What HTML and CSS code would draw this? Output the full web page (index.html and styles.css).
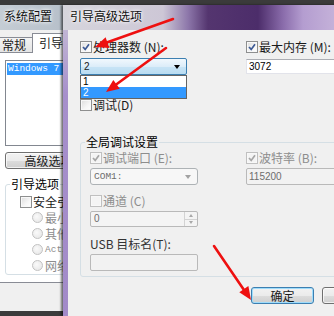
FILE: index.html
```html
<!DOCTYPE html>
<html lang="zh-CN">
  <head>
    <meta charset="UTF-8" />
    <meta name="viewport" content="width=device-width, initial-scale=1.0" />
    <title>引导高级选项</title>
    <link rel="stylesheet" href="styles.css">
  </head>

  <body>
    <div class="desk">
      <!-- msconfig window, behind -->
      <div class="win sys">
        <div class="titlebar">系统配置</div>
        <div class="client">
          <div class="tabs">
            <span class="tab">常规</span>
            <span class="tab active">引导</span>
          </div>
          <div class="panel">
            <div class="oslist">
              <div class="os sel mono">Windows 7</div>
            </div>
            <div class="btn wide">高级选项(V)...</div>
            <fieldset class="group bootopts">
              <legend>引导选项</legend>
              <div class="check"><span class="box"></span>安全引导(F)</div>
              <div class="radio"><span class="dot"></span>最小(I)</div>
              <div class="radio"><span class="dot"></span>其他外壳(L)</div>
              <div class="radio"><span class="dot"></span><span class="mono">Active Directory</span> 修复(P)</div>
              <div class="radio"><span class="dot"></span>网络(N)</div>
            </fieldset>
          </div>
        </div>
      </div>

      <!-- advanced boot options dialog -->
      <div class="win adv">
        <div class="titlebar">引导高级选项</div>
        <div class="client">
          <div class="pair">
            <div class="check">
              <span class="box"><svg width="8" height="8" viewBox="0 0 8 8"><path d="M1 4 L3.2 6.4 L7 1.2" /></svg></span>处理器数 (N):
            </div>
            <div class="check">
              <span class="box"><svg width="8" height="8" viewBox="0 0 8 8"><path d="M1 4 L3.2 6.4 L7 1.2" /></svg></span>最大内存 (M):
            </div>
            <div class="combo open">
              <span class="num">2</span><span class="caret"></span>
              <div class="droplist">
                <div class="item num">1</div>
                <div class="item num sel">2</div>
              </div>
            </div>
            <div class="field num">3072</div>
          </div>

          <div class="check debug"><span class="box"></span>调试(D)</div>

          <fieldset class="group global">
            <legend>全局调试设置</legend>
            <div class="pair inner">
              <div class="check off">
                <span class="box"><svg width="8" height="8" viewBox="0 0 8 8"><path d="M1 4 L3.2 6.4 L7 1.2" /></svg></span>调试端口 (E):
              </div>
              <div class="check off">
                <span class="box"><svg width="8" height="8" viewBox="0 0 8 8"><path d="M1 4 L3.2 6.4 L7 1.2" /></svg></span>波特率 (B):
              </div>
              <div class="combo off"><span class="mono">COM1:</span><span class="caret"></span></div>
              <div class="field off num">115200</div>
              <div class="check off low"><span class="box"></span>通道 (C)</div>
              <div></div>
              <div class="spin off">
                <span class="num">0</span>
                <span class="spinbtns"><span class="up"></span><span class="down"></span></span>
              </div>
              <div></div>
              <div class="caption low">USB 目标名(T):</div>
              <div></div>
              <div class="field off"></div>
            </div>
          </fieldset>

          <div class="buttons">
            <div class="btn default">确定</div>
            <div class="btn">取消</div>
          </div>
        </div>
      </div>

      <!-- red arrows drawn on top of the screenshot -->
      <svg class="arrows" width="334" height="316" viewBox="0 0 334 316">
        <g fill="#ee1010" stroke="#ee1010" stroke-width="2.6" stroke-linecap="round">
          <line x1="173" y1="19" x2="106" y2="42.8" />
          <polygon points="95,47 109.4,47.9 105.6,37.3" stroke="none" />
          <line x1="166" y1="48" x2="115.5" y2="85" />
          <polygon points="106,92 119.8,88.7 113.3,80" stroke="none" />
          <line x1="214" y1="246" x2="244" y2="290" />
          <polygon points="251,300 248.4,286 239.3,292.3" stroke="none" />
        </g>
      </svg>
    </div>
  </body>
</html>
```

FILE: styles.css
```css
* {
  box-sizing: border-box;
}

body {
  margin: 0;
  background: #3b3b3b;
  font-family: "Noto Sans CJK SC", "DejaVu Sans", sans-serif;
  font-size: 12px;
  color: #1a1a1a;
}

.desk {
  position: relative;
  width: 334px;
  height: 316px;
  overflow: hidden;
}

.mono {
  font-family: "Liberation Mono", monospace;
  font-size: 9.5px;
}

.num {
  font-family: "Liberation Sans", sans-serif;
  font-size: 10px;
}

/* windows */
.win {
  position: absolute;
  top: 5px;
  display: flex;
  flex-direction: column;
}

.titlebar {
  height: 25px;
  line-height: 22px;
  white-space: nowrap;
  color: #111;
  text-shadow: 0 0 5px #fff, 0 0 3px #fff;
}

.client {
  flex: 1;
  margin: 0 5px;
  background: #f0f0f0;
  overflow: hidden;
}

/* only the part left of the dialog is visible */
.sys {
  left: -12px;
  width: 75px;
  height: 306px;
  background: #bcc5ce;
}

.sys .titlebar {
  padding-left: 16px;
  line-height: 21px;
  overflow: hidden;
  background: linear-gradient(to right, #c7cfd6, #b7c0ca);
}

.sys .client {
  margin-right: 0;
}

.adv {
  left: 63px;
  width: 339px;
  height: 311px;
  background: linear-gradient(#cbc4d8, #a68fcb 90px, #a28ac8);
  box-shadow: -2px 0 2px rgba(0, 0, 0, 0.55);
}

.adv .titlebar {
  padding-left: 7px;
  background: linear-gradient(
    to right,
    #d6d5dc 0,
    #cdc7d6 100px,
    #8d77aa 125px,
    #54356f 145px,
    #4c2d6a 195px,
    #8a6cab 220px,
    #b49dd0 240px,
    #c4b1d9 271px
  );
}

.adv .client {
  padding: 10px 12px 0;
}

/* tabs, msconfig */
.tabs {
  display: flex;
  align-items: flex-end;
  height: 22px;
  padding-left: 2px;
}

.tab {
  height: 15px;
  line-height: 13px;
  padding: 0 6px;
  border: 1px solid #898c95;
  border-bottom: none;
  background: linear-gradient(#f4f4f4, #e4e4e4);
  white-space: nowrap;
}

.tab.active {
  height: 20px;
  line-height: 17px;
  margin-left: -1px;
  margin-bottom: -1px;
  background: #fff;
  position: relative;
}

.panel {
  margin: 0 0 0 2px;
  border: 1px solid #898c95;
  border-right: none;
  background: #fff;
  padding: 7px 0 7px 9px;
}

.oslist {
  width: 160px;
  height: 86px;
  border: 1px solid #828790;
  padding: 2px 1px;
}

.os {
  line-height: 12px;
  padding-left: 1px;
  white-space: nowrap;
}

.os.sel {
  background: #3399ff;
  color: #fff;
}

/* buttons */
.btn {
  width: 63px;
  height: 17px;
  line-height: 15px;
  text-align: center;
  border: 1px solid #707070;
  border-radius: 3px;
  background: linear-gradient(#f2f2f2, #ebebeb 50%, #dddddd 51%, #cfcfcf);
  box-shadow: inset 0 0 0 1px rgba(255, 255, 255, 0.7);
  white-space: nowrap;
}

.btn.wide {
  width: 112px;
  margin-top: 6px;
}

.btn.default {
  border-color: #3c7fb1;
  box-shadow: inset 0 0 0 1px #9fdcfb;
}

.buttons {
  display: flex;
  justify-content: flex-end;
  gap: 8px;
  margin-top: 10px;
}

/* group boxes */
.group {
  margin: 0;
  min-width: 0;
  border: 1px solid #d5dfe5;
  border-radius: 3px;
}

.group legend {
  padding: 0 1px;
  line-height: 12px;
  color: #000;
}

.bootopts {
  width: 160px;
  margin-top: 9px;
  padding: 5px 0 1px 14px;
}

.bootopts legend {
  margin-left: -10px;
}

.global {
  margin-top: 24px;
  padding: 3px 9px 5px;
}

.global legend {
  margin-left: -5px;
}

/* check boxes and radios */
.check {
  display: flex;
  align-items: center;
  gap: 1px;
  height: 14px;
  line-height: 14px;
  white-space: nowrap;
}

.box {
  flex: none;
  width: 12px;
  height: 12px;
  border: 1px solid #8e8f8f;
  background: linear-gradient(135deg, #dcdcdc, #f6f6f6 60%, #fff);
  box-shadow: inset 0 0 0 1px #f8f8f8;
  display: flex;
  align-items: center;
  justify-content: center;
}

.box svg path {
  fill: none;
  stroke: #3d5a95;
  stroke-width: 1.7;
}

.check.off {
  color: #8d8d8d;
}

.check.off .box {
  border-color: #c0c0c0;
  background: #f4f4f4;
}

.check.off .box svg path {
  stroke: #a6a6a6;
}

.check.debug {
  margin-top: 23px;
}

.radio {
  display: flex;
  align-items: center;
  gap: 2px;
  height: 16px;
  padding-left: 12px;
  color: #8d8d8d;
  white-space: nowrap;
}

.dot {
  flex: none;
  width: 11px;
  height: 11px;
  border: 1px solid #c2c2c2;
  border-radius: 50%;
  background: radial-gradient(circle at 40% 40%, #fafafa, #e3e3e3);
}

/* layout grid for two columns */
.pair {
  display: grid;
  grid-template-columns: 107px 1fr;
  grid-template-rows: 14px 17px;
  column-gap: 59px;
  row-gap: 4px;
}

.pair.inner {
  grid-template-columns: 108px 1fr;
  grid-template-rows: 14px 17px 20px 16px 21px 17px;
  column-gap: 48px;
  row-gap: 3px;
}

.low {
  align-self: end;
}

.caption {
  height: 18px;
  line-height: 18px;
  margin-bottom: -2px;
  color: #333;
  white-space: nowrap;
}

/* inputs */
.combo {
  position: relative;
  height: 17px;
  display: flex;
  align-items: center;
  justify-content: space-between;
  padding: 0 6px 0 3px;
  border: 1px solid #adb2b5;
  border-radius: 3px;
  background: #f7f7f7;
}

.combo.open {
  border-color: #3c7fb1;
  border-radius: 2px;
  background: linear-gradient(#f1f8fd, #dcedf9 50%, #c8e4f6 51%, #b9dcf2);
}

.caret {
  width: 0;
  height: 0;
  border-left: 3.5px solid transparent;
  border-right: 3.5px solid transparent;
  border-top: 4px solid #000;
}

.combo.off {
  color: #6d6d6d;
}

.combo.off .caret {
  border-top-color: #a2a2a2;
}

.droplist {
  position: absolute;
  top: 16px;
  left: -1px;
  width: 107px;
  border: 1px solid #646464;
  background: #fff;
  color: #000;
}

.item {
  height: 11px;
  line-height: 11px;
  padding-left: 2px;
}

.item.sel {
  background: #3399ff;
  color: #fff;
}

.field {
  align-self: center;
  height: 15px;
  line-height: 13px;
  padding-left: 2px;
  border: 1px solid #e2e3ea;
  border-top-color: #abadb3;
  background: #fff;
  color: #000;
}

.field.off {
  height: 17px;
  line-height: 15px;
  border: 1px solid #b9b9b9;
  border-radius: 2px;
  background: #f2f2f2;
  color: #6d6d6d;
}

.spin {
  display: flex;
  justify-content: space-between;
  height: 16px;
  line-height: 14px;
  padding-left: 3px;
  border: 1px solid #b9b9b9;
  border-radius: 2px;
  background: #f4f4f4;
  color: #6d6d6d;
}

.spinbtns {
  display: flex;
  flex-direction: column;
  width: 13px;
  border-left: 1px solid #d3d3d3;
}

.spinbtns span {
  flex: 1;
  display: flex;
  align-items: center;
  justify-content: center;
}

.spinbtns .up {
  border-bottom: 1px solid #d3d3d3;
}

.spinbtns .up::after {
  content: "";
  border-left: 2.5px solid transparent;
  border-right: 2.5px solid transparent;
  border-bottom: 3px solid #a8a8a8;
}

.spinbtns .down::after {
  content: "";
  border-left: 2.5px solid transparent;
  border-right: 2.5px solid transparent;
  border-top: 3px solid #a8a8a8;
}

.arrows {
  position: absolute;
  left: 0;
  top: 0;
  pointer-events: none;
}
```
